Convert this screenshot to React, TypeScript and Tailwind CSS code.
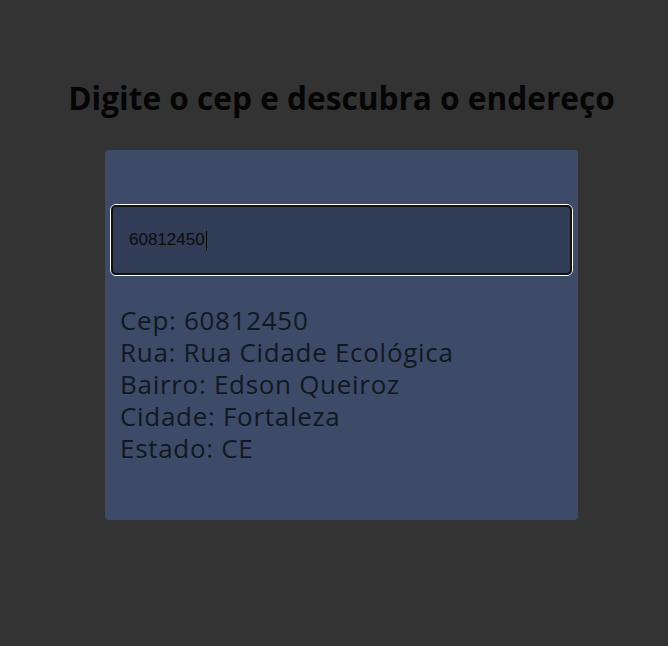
import React from "react";

export default function App() {
  const lines = [
    "Cep: 60812450",
    "Rua: Rua Cidade Ecológica",
    "Bairro: Edson Queiroz",
    "Cidade: Fortaleza",
    "Estado: CE",
  ];
  return (
    <div className="min-h-screen w-full bg-[#333333] flex flex-col items-center pt-[78px] pl-[15px] font-['Open_Sans',sans-serif]">
      <h1 className="text-[31.6px] leading-[40px] font-bold text-[#050505]">
        Digite o cep e descubra o endereço
      </h1>
      <div className="mt-[32px] w-[473px] h-[370px] bg-[#3d4b69] rounded-[4px] pt-[54px] px-[5px]">
        <div className="h-[72px] rounded-[6px] border border-white">
          <div className="h-full rounded-[5px] border-2 border-[#111111] bg-[#313c57] flex items-center pl-[16px]">
            <span className="font-['Liberation_Sans',sans-serif] text-[17px] text-[#0c0c0c]">60812450</span>
            <span className="w-px h-[19px] bg-black ml-[1px]" />
          </div>
        </div>
        <div className="mt-[28px] pl-[10px] text-[26px] leading-[32px] text-[#121722] font-normal tracking-[0.7px]">
          {lines.map((l) => (
            <div key={l}>{l}</div>
          ))}
        </div>
      </div>
    </div>
  );
}
